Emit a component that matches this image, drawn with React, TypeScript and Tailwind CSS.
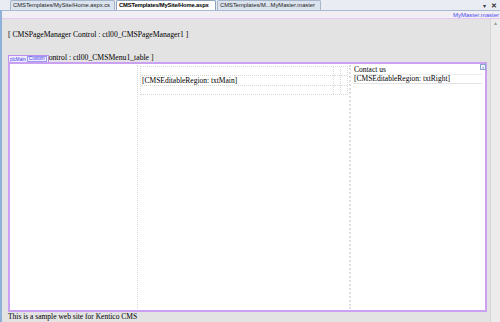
import React from 'react';

const serif = { fontFamily: '"Liberation Serif", "Times New Roman", serif' };
const sans = { fontFamily: '"Liberation Sans", Arial, sans-serif' };

const Tab = ({ label, active, width }: { label: string; active?: boolean; width: string }) => (
  <div
    className={`${width} h-[10px] flex items-center px-[2px] border border-b-0 rounded-t-[2px] text-[5.8px] leading-none whitespace-nowrap overflow-hidden ${
      active ? 'bg-white border-[#8ea2bd] font-bold text-black tracking-[-0.15px]' : 'bg-[#dbe3ee] border-[#a7b6ca] text-[#222]'
    }`}
    style={sans}
  >
    {label}
  </div>
);

export default function App() {
  return (
    <div className="w-[500px] h-[322px] bg-[#e3e3e3] flex flex-col overflow-hidden">
      {/* document tabs */}
      <div className="h-[10px] flex items-end bg-[#e9edf3] pl-[10px] pr-[3px] gap-[1px]">
        <Tab label="CMSTemplates/MySite/Home.aspx.cs" width="w-[105px]" />
        <Tab label="CMSTemplates/MySite/Home.aspx" width="w-[100px]" active />
        <Tab label="CMSTemplates/M...MyMaster.master" width="w-[104px]" />
        <div className="flex-1" />
        <div className="flex items-center gap-[5px] pb-[1px] text-[7px] leading-none text-[#333]" style={sans}>
          <span className="text-[6px]">▾</span>
          <span className="font-bold">✕</span>
        </div>
      </div>

      <div className="flex-1 min-h-0 flex border-l-2 border-[#8fb0d8] border-t border-t-[#a9bad0]">
        <div className="flex-1 flex flex-col">
          {/* master page bar */}
          <div className="h-[8px] bg-[#f1eff3] border-b border-[#e6c8f2] flex items-center justify-end pr-[1px]">
            <span className="text-[6px] leading-none text-[#4d4df0]" style={sans}>MyMaster.master</span>
          </div>

          <div className="flex-1 min-h-0 flex">
            <div className="flex-1 flex flex-col pl-[6px] pr-[1px]" style={serif}>
              <div className="h-[21px] flex items-end pb-[1px] text-[7.7px] leading-none text-black">
                [ CMSPageManager Control : ctl00_CMSPageManager1 ]
              </div>

              <div className="h-[15px]" />

              {/* placeholder label */}
              <div className="h-[7px] flex items-end">
                <div className="flex items-end border border-b-0 border-[#b98ef0] bg-[#f3ecfd] px-[1px] text-[4.6px] leading-[5px] text-[#3b3bf0]" style={sans}>
                  <span>plcMain</span>
                  <span className="ml-[1px] border border-[#9a9af0] px-[1px] leading-[4px]">Custom</span>
                </div>
                <span className="text-[7.7px] leading-none text-black">ontrol : ctl00_CMSMenu1_table ]</span>
              </div>

              {/* content box */}
              <div className="h-[250px] w-[479px] border-2 border-[#c9a0f2] bg-white flex relative">
                <div className="w-[127px] border-r border-dotted border-[#d8d8d8] m-[1px]" />

                <div className="w-[212px] border-r-2 border-dotted border-[#dedede] my-[1px] pt-[1px] px-[1px]">
                  <div className="border border-dotted border-[#d8d8d8] flex h-[29px]">
                    <div className="flex-1 flex flex-col">
                      <div className="h-[9px] border-b border-dotted border-[#d8d8d8]" />
                      <div className="h-[10px] border-b border-dotted border-[#d8d8d8] flex items-center px-[1px] text-[7.5px] leading-none text-black">
                        [CMSEditableRegion: txtMain]
                      </div>
                      <div className="flex-1" />
                    </div>
                    <div className="w-[7px] border-l border-dotted border-[#d8d8d8] flex flex-col">
                      <div className="h-[9px] border-b border-dotted border-[#d8d8d8]" />
                      <div className="h-[10px] border-b border-dotted border-[#d8d8d8]" />
                    </div>
                    <div className="w-[7px] border-l border-dotted border-[#d8d8d8] flex flex-col">
                      <div className="h-[9px] border-b border-dotted border-[#d8d8d8]" />
                      <div className="h-[10px] border-b border-dotted border-[#d8d8d8]" />
                    </div>
                  </div>
                </div>

                <div className="flex-1 flex flex-col pt-[2px] pl-[2px] pr-[3px]">
                  <div className="h-[9px] border-b border-[#ececec] flex items-center px-[1px] text-[7.5px] leading-none text-black">
                    Contact us
                  </div>
                  <div className="h-[9px] border-b border-[#e2e2e2] flex items-center px-[1px] text-[7.5px] leading-none text-black">
                    [CMSEditableRegion: txtRight]
                  </div>
                </div>

                {/* smart tag glyph */}
                <div className="absolute right-[-1px] top-[0px] w-[6px] h-[6px] border border-[#8aa4cf] bg-[#eef3fb] flex items-center justify-center text-[5px] leading-none text-[#3a5fa8]" style={sans}>
                  ›
                </div>
              </div>

              <div className="h-[9px] flex items-center text-[7.5px] leading-none text-black">
                This is a sample web site for Kentico CMS
              </div>
            </div>

            {/* vertical scrollbar */}
            <div className="w-[10px] bg-[#ececec] border-l border-[#d6d6d6] flex flex-col items-center">
              <div className="h-[10px] flex items-center justify-center text-[5px] text-[#9a9a9a]" style={sans}>▲</div>
              <div className="flex-1" />
            </div>
          </div>
        </div>
      </div>
    </div>
  );
}
